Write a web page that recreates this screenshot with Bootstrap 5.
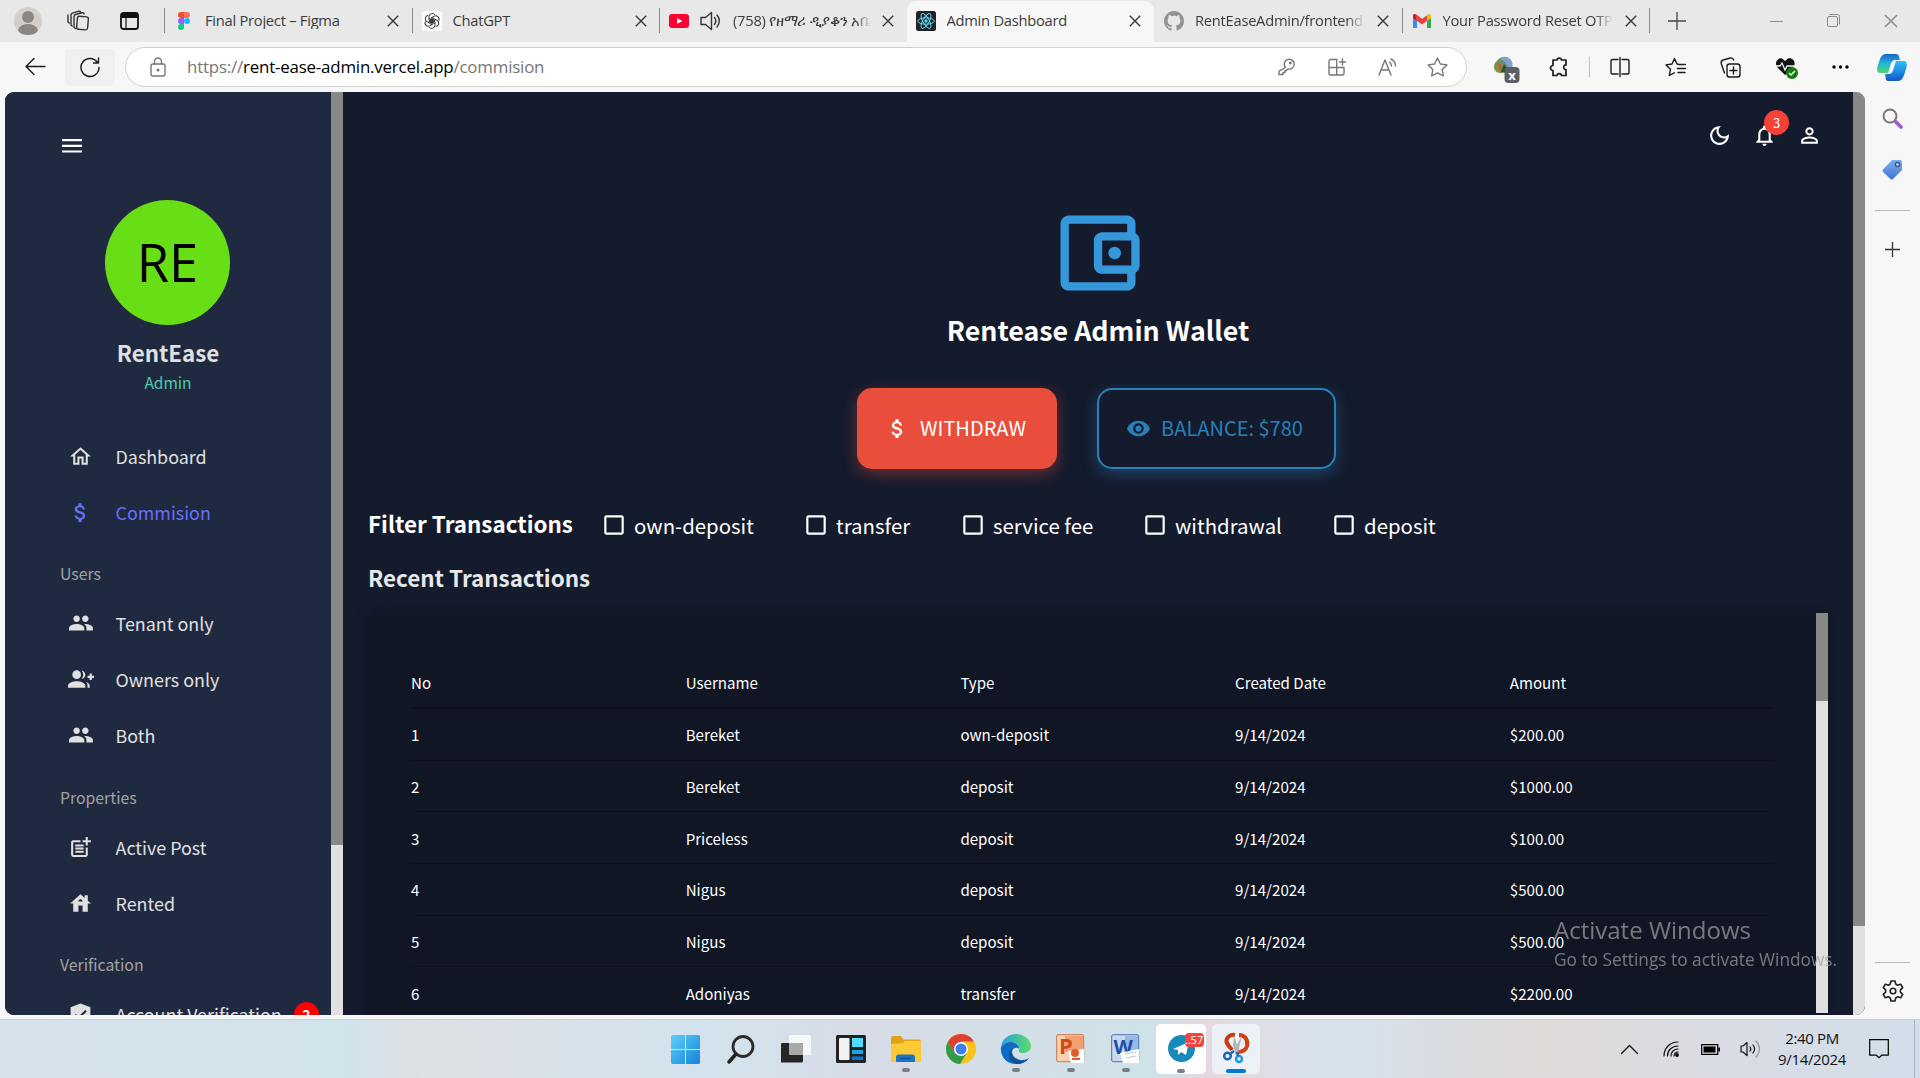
<!DOCTYPE html>
<html lang="en">
<head>
<meta charset="utf-8">
<title>Admin Dashboard</title>
<link href="https://cdn.jsdelivr.net/npm/bootstrap@5.3.0/dist/css/bootstrap.min.css" rel="stylesheet">
<style>
  html, body { height: 100%; overflow: hidden; }
  body { width: 1920px; height: 1078px; background: #f7f7f7; font-family: "Open Sans", "Noto Sans", sans-serif; color: #333; line-height: 1.2; }
  svg { display: block; flex: none; overflow: visible; }
  .ln { fill: none; stroke: currentColor; stroke-width: 1.4; stroke-linecap: round; stroke-linejoin: round; }
  .t { white-space: nowrap; }

  /* window tab strip */
  .tabstrip { height: 42px; padding-bottom: 1px; background: #e8e8e8; }
  .strip-left { width: 164px; padding-left: 14px; }
  .wtab { width: 247.5px; padding-left: 9px; border-left: 1px solid #8a8a8a; height: 25px; }
  .wtab.first-after, .wtab.live { border-left-color: transparent; }
  .wtab .ico { width: 20px; height: 20px; }
  .wtab .cap { width: 172px; margin-left: 11px; font-size: 14.7px; color: #3c3c3c; overflow: hidden; letter-spacing: -.25px; }
  .wtab .cap.fade-end { -webkit-mask-image: linear-gradient(90deg, #000 88%, transparent 99%); }
  .wtab .shut { margin-left: 10px; }
  .wtab.live { height: 41px; margin-top: 1px; background: #f7f7f7; border-radius: 9px 9px 0 0; border-left: 0; padding-left: 9px; }
  .wincontrols { color: #8b8b8b; }

  /* toolbar */
  .toolbar { height: 50px; background: #f7f7f7; color: #1b1b1b; }
  .reload { width: 50px; height: 37px; background: #f0f0f0; border-radius: 5px; }
  .address { width: 1342px; height: 40px; margin-left: 10px; border: 1px solid #d0d0d0; border-radius: 20px; background: #fff; color: #767676; padding-left: 24px; padding-right: 18px; }
  .url { font-size: 16.9px; margin-left: 21px; color: #767676; letter-spacing: -.2px; }
  .url b { font-weight: 400; color: #000; }

  /* page area */
  .stage { height: 923px; padding-left: 5px; }
  .viewport { width: 1860px; height: 923px; border-radius: 9px; overflow: hidden; background: #141b2d; font-family: "Noto Sans CJK JP", "Noto Sans CJK SC", sans-serif; }
  .rail { width: 326px; background: #1f2940; color: #e0e0e0; overflow: hidden; }
  .track { width: 12px; background: #e0e0e0; flex: none; }
  .thumb { background: #888; }
  .burger { margin: 47px 0 0 55px; height: 24px; color: #fff; }
  .disc { width: 125px; height: 125px; margin: 37px auto 0 100px; background: #68de17; color: #000; font: 400 52.5px/124px "Open Sans", sans-serif; }
  .brand { width: 326px; height: 32px; margin-top: 11px; font-size: 22.3px; line-height: 32px; font-weight: 700; }
  .role { height: 26px; margin-top: 1px; font-size: 15.5px; line-height: 26px; color: #4cceac; }
  .rolegap { height: 33px; }
  .menu-item { height: 56px; padding-left: 63px; font-size: 17.9px; line-height: 26px; }
  .menu-item .lbl { margin-left: 22.5px; }
  .menu-item.on { color: #6870fa; }
  .menu-head { height: 24px; margin: 22px 0 9px; padding-left: 55px; font-size: 15.8px; line-height: 24px; color: #a3a3a3; }
  .menu-head.wide-gap { margin-top: 23px; }
  .notice { width: 25px; height: 25px; line-height: 25px; font-size: 14px; background: red; color: #fff; font-weight: 700; margin-left: 12px; }

  .pane { width: 1510px; padding: 0 25px 0 25px; color: #fff; }
  .topicons { height: 86px; padding-right: 6px; gap: 20px; }
  .alarm { width: 25px; height: 25px; font-size: 13px; line-height: 25px; background: #f44336; top: -13px; left: 12px; }
  .wallet { margin-top: 25px; color: #3498db; }
  .walletname { font-size: 26.8px; line-height: 40px; font-weight: 700; margin-top: 7px; }
  .actions { margin-top: 38px; gap: 40px; margin-right: 3px; }
  .pill { height: 81px; border-radius: 15px; font-size: 20px; border: 0; padding: 0; }
  .pill-red { width: 200px; background: #e94e3d; color: #fff; padding-right: 3px; box-shadow: 0 5px 15px rgba(231,76,60,.4); }
  .pill-blue { width: 239px; border: 2px solid #2980b9; color: #2980b9; padding-right: 4px; box-shadow: 0 5px 15px rgba(41,128,185,.4); }
  .pill .t { margin-top: -2px; }
  .heading { font-size: 22.4px; line-height: 32px; font-weight: 700; }
  .filters { margin-top: 38px; height: 32px; }
  .chk { font-size: 20.4px; line-height: 30px; padding-top: 3px; }
  .ledger { width: 1461px; height: 400px; margin-top: 20px; margin-left: -1px; background: #101624; border-radius: 12px 0 0 0; box-shadow: 0 0 12px rgba(10,14,24,.55); }
  .ledger-body { width: 1449px; padding: 43px 43px 0 44px; }
  .trow { height: 51.7px; border-bottom: 1px solid #0c1019; font-size: 15.1px; line-height: 22px; color: #fff; }
  .trow.top { height: 53px; border-bottom-width: 2px; }
  .trow > div { width: 274.7px; flex: none; }

  /* browser side rail */
  .siderail { width: 55px; color: #222; }
  .siderail hr { width: 35px; margin: 0; border-top: 1px solid #bbb; opacity: 1; }

  .watermark { left: 1554px; top: 912px; color: #a0a0a0; opacity: .72; }
  .watermark .w1 { font-size: 24px; line-height: 36px; }
  .watermark .w2 { font-size: 17.3px; line-height: 24px; }

  /* taskbar */
  .taskbar { height: 59px; margin-top: 4px; padding-left: 658px; background: linear-gradient(90deg,#d7e2ec 0,#d0e2ea 18%,#dde0e4 22%,#d3e3ed 36%,#d7dce6 46%,#cfe2e9 60%,#e4d9de 63%,#d5e2ec 69%,#d9dde3 75%,#e1dad9 80%,#dadbe2 88%,#d2dfeb 100%); border-top: 1px solid #c4ced8; color: #111; }
  .app { width: 55px; height: 59px; padding-top: 15px; }
  .mk { width: 8px; height: 4px; border-radius: 2px; background: #7b7f84; margin-top: 4px; }
  .tile .mk { margin-top: 7px; }
  .tile .mk.active-app { width: 20px; background: #0078d4; margin-top: 6px; }
  .tile { width: 50px; height: 50px; border-radius: 5px; background: #fff; margin: 4px 3px 0 3px; padding-top: 11px; }
  .tile.soft { background: #ebf1f7; width: 48px; }
  .clock { font-size: 15px; line-height: 21px; letter-spacing: -.35px; }
  .cnt { left: 17px; top: -2px; width: 19px; height: 14px; border-radius: 4px; background: #ee4540; color: #fff; font-size: 11px; line-height: 14px; }
</style>
</head>
<body>
<svg width="0" height="0" class="position-absolute">
  <defs>
    <symbol id="x" viewBox="0 0 12 12"><path d="M.8.8l10.4 10.4M11.2.8L.8 11.2" fill="none" stroke="currentColor" stroke-width="1.3"/></symbol>
    <symbol id="people" viewBox="0 0 24 24"><path d="M16 11c1.66 0 2.99-1.34 2.99-3S17.66 5 16 5s-3 1.34-3 3 1.34 3 3 3zm-8 0c1.66 0 2.99-1.34 2.99-3S9.66 5 8 5 5 6.34 5 8s1.34 3 3 3zm0 2c-2.33 0-7 1.17-7 3.5V19h14v-2.500c0-2.330-4.670-3.500-7-3.500zm8 0c-.29 0-.62.02-.97.05 1.160.840 1.970 1.970 1.970 3.450V19h6v-2.500c0-2.330-4.670-3.500-7-3.500z"/></symbol>
    <symbol id="dollar" viewBox="0 0 24 24"><path d="M11.800 10.900c-2.270-.590-3-1.200-3-2.150 0-1.090 1.010-1.850 2.700-1.850 1.780 0 2.440.850 2.500 2.100h2.210c-.070-1.720-1.120-3.300-3.210-3.810V3h-3v2.160c-1.940.420-3.500 1.680-3.500 3.610 0 2.310 1.910 3.460 4.700 4.130 2.500.600 3 1.480 3 2.410 0 .690-.490 1.790-2.700 1.790-2.060 0-2.870-.920-2.980-2.100h-2.200c.120 2.190 1.760 3.420 3.680 3.830V21h3v-2.150c1.950-.370 3.500-1.500 3.500-3.550 0-2.840-2.430-3.810-4.700-4.400z"/></symbol>
    <symbol id="box" viewBox="0 0 24 24"><path d="M19 5v14H5V5h14m0-2H5c-1.100 0-2 .900-2 2v14c0 1.100.900 2 2 2h14c1.100 0 2-.900 2-2V5c0-1.100-.900-2-2-2z"/></symbol>
  </defs>
</svg>

<!-- tab strip -->
<header class="tabstrip d-flex align-items-center">
  <div class="strip-left d-flex align-items-center">
    <svg width="28" height="28" viewBox="0 0 28 28"><circle cx="14" cy="14" r="14" fill="#d3d0cb"/><circle cx="14" cy="10" r="6" fill="#8b8782"/><path d="M4 24c1-5 5-7 10-7s9 2 10 7c-3 3-6 4-10 4s-7-1-10-4z" fill="#8b8782"/></svg>
    <svg class="ln" style="margin-left:25px" width="22" height="22" viewBox="0 0 22 22"><rect x="10" y="6.500" width="11" height="13" rx="2" transform="rotate(5 15 13)"/><path d="M8.500 18.500L7 17.500V6.500q0-1.500 1.500-2L15 2.800q1.500-.3 2.200 1M5.200 16L4 15V5.200q0-1.500 1.300-2l6-1.900q1.500-.4 2.200.5M2.200 13L1 12V5"/></svg>
    <svg style="margin-left:31px" width="19" height="18" viewBox="0 0 19 18"><rect x="1" y="1" width="17" height="16" rx="2.500" fill="none" stroke="#111" stroke-width="1.800"/><path d="M1 2h17v4H1z" fill="#111"/><path d="M6 6v11" stroke="#111" stroke-width="1.200"/></svg>
  </div>
  <div class="wtab d-flex align-items-center">
    <svg class="ico" viewBox="0 0 20 20"><path d="M10 1H7a3 3 0 000 6h3z" fill="#f24e1e"/><path d="M10 1h3a3 3 0 010 6h-3z" fill="#ff7262"/><path d="M10 7H7a3 3 0 000 6h3z" fill="#a259ff"/><circle cx="13" cy="10" r="3" fill="#1abcfe"/><path d="M10 13H7a3 3 0 103 3z" fill="#0acf83"/></svg>
    <div class="cap t">Final Project – Figma</div><svg class="shut" width="12" height="12"><use href="#x"/></svg>
  </div>
  <div class="wtab d-flex align-items-center">
    <svg class="ico" viewBox="0 0 20 20"><rect width="20" height="20" rx="3" fill="#fff"/><g fill="none" stroke="#333" stroke-width="1"><path id="petal" d="M7 9.200V5.500a3.300 3.300 0 016-1.500M7 9.200l3 1.700 3.800-2.200"/><use href="#petal" transform="rotate(60 10 10)"/><use href="#petal" transform="rotate(120 10 10)"/><use href="#petal" transform="rotate(180 10 10)"/><use href="#petal" transform="rotate(240 10 10)"/><use href="#petal" transform="rotate(300 10 10)"/></g></svg>
    <div class="cap t">ChatGPT</div><svg class="shut" width="12" height="12"><use href="#x"/></svg>
  </div>
  <div class="wtab d-flex align-items-center">
    <svg class="ico" viewBox="0 0 20 20"><rect y="3" width="20" height="14" rx="3" fill="#f03"/><path d="M8 7l5.500 3L8 13z" fill="#fff"/></svg>
    <svg class="ln" style="margin-left:11px" width="20" height="20" viewBox="0 0 20 20"><path d="M1 6.500v7h4.500l6 5V1.500l-6 5zM14.500 6.500c1.500 2 1.500 5 0 7M17 4c3 3.500 3 8.500 0 12"/></svg>
    <div class="cap t fade-end" style="width:139px;margin-left:13px">(758) የዘማሪ ዲያቆን አቤ</div><svg class="shut" width="12" height="12"><use href="#x"/></svg>
  </div>
  <div class="wtab live d-flex align-items-center">
    <svg class="ico" viewBox="0 0 20 20"><rect width="20" height="20" rx="2.500" fill="#222"/><g fill="none" stroke="#5fd3f3" stroke-width="1"><ellipse cx="10" cy="10" rx="8.300" ry="3.200"/><ellipse cx="10" cy="10" rx="8.300" ry="3.200" transform="rotate(60 10 10)"/><ellipse cx="10" cy="10" rx="8.300" ry="3.200" transform="rotate(120 10 10)"/></g><circle cx="10" cy="10" r="1.700" fill="#5fd3f3"/></svg>
    <div class="cap t">Admin Dashboard</div><svg class="shut" width="12" height="12"><use href="#x"/></svg>
  </div>
  <div class="wtab first-after d-flex align-items-center">
    <svg class="ico" viewBox="0 0 16 16" fill="#909396"><path d="M8 0C3.580 0 0 3.580 0 8c0 3.540 2.290 6.530 5.470 7.590.400.070.550-.170.550-.380 0-.190-.010-.820-.010-1.490-2.010.370-2.530-.490-2.690-.940-.090-.230-.480-.940-.820-1.130-.280-.150-.680-.520-.010-.530.630-.010 1.080.580 1.230.820.720 1.210 1.870.870 2.330.660.070-.520.280-.870.510-1.070-1.780-.200-3.640-.890-3.640-3.950 0-.870.310-1.590.820-2.150-.080-.200-.360-1.020.080-2.120 0 0 .670-.210 2.200.820.640-.180 1.320-.270 2-.270s1.360.090 2 .270c1.530-1.040 2.200-.820 2.200-.820.440 1.100.160 1.920.080 2.120.510.560.820 1.270.820 2.150 0 3.070-1.870 3.750-3.650 3.950.290.250.540.730.540 1.480 0 1.070-.010 1.930-.010 2.200 0 .210.150.460.550.380A8 8 0 0016 8c0-4.420-3.580-8-8-8z"/></svg>
    <div class="cap t fade-end">RentEaseAdmin/frontend/</div><svg class="shut" width="12" height="12"><use href="#x"/></svg>
  </div>
  <div class="wtab d-flex align-items-center">
    <svg class="ico" viewBox="0 0 20 20"><path d="M1 5v12h4V9z" fill="#4285f4"/><path d="M19 5v12h-4V9z" fill="#34a853"/><path d="M1 4.500C1 3 3 2.500 4 3.500L10 8v5L1 7z" fill="#c5221f"/><path d="M4 3.500L10 8l6-4.500V9l-6 4.500L4 9z" fill="#ea4335"/><path d="M15 4.300C17 2.500 19 3 19 5v2l-4 3z" fill="#fbbc04"/></svg>
    <div class="cap t fade-end">Your Password Reset OTP</div><svg class="shut" width="12" height="12"><use href="#x"/></svg>
  </div>
  <div class="wtab d-flex align-items-center wincontrols" style="padding-left:18px">
    <svg width="18" height="18" viewBox="0 0 18 18"><path d="M9 0v18M0 9h18" stroke="#444" stroke-width="1.300"/></svg>
    <svg style="margin-left:84px" width="13" height="14" viewBox="0 0 13 14"><path d="M0 7.500h13" stroke="currentColor"/></svg>
    <svg class="ln" style="margin-left:44px;stroke-width:1" width="13" height="13" viewBox="0 0 13 13"><rect x=".5" y="2.500" width="10" height="10" rx="1.500"/><path d="M3 .5h7.500a2 2 0 012 2V10"/></svg>
    <svg style="margin-left:44px" width="14" height="14"><use href="#x"/></svg>
  </div>
</header>

<!-- toolbar -->
<nav class="toolbar d-flex align-items-center">
  <svg class="ln" style="margin-left:25px" width="20" height="18" viewBox="0 0 20 18"><path d="M20 8.500H1M9 .5L1 8.500l8 8"/></svg>
  <div class="reload d-flex align-items-center justify-content-center" style="margin-left:20px"><svg class="ln" width="20" height="20" viewBox="0 0 20 20"><path d="M17.500 5.500A9 9 0 1019 10.500M18.500 1v5h-5"/></svg></div>
  <div class="address d-flex align-items-center">
    <svg class="ln" width="16" height="20" viewBox="0 0 16 20"><rect x="1" y="7" width="14" height="12" rx="2"/><path d="M4.500 7V4.500a3.500 3.500 0 017 0V7"/><circle cx="8" cy="13" r=".8" fill="currentColor"/></svg>
    <div class="url t">https://<b>rent-ease-admin.vercel.app</b>/commision</div>
    <div class="ms-auto d-flex align-items-center">
      <svg class="ln" width="17" height="18" viewBox="0 0 17 18"><path d="M7.500 9.500A5 5 0 1110 11L8.500 12.500H7v2H5v2H1v-3.300z"/><circle cx="12.300" cy="5" r=".7"/></svg>
      <svg class="ln" style="margin-left:33px" width="19" height="18" viewBox="0 0 19 18"><path d="M9 1.500H2.500Q1 1.500 1 3v12.500Q1 17 2.500 17h12q1.500 0 1.500-1.500V9.500H1M8.700 1.500V17M14.500 1v6M11.500 4h6"/></svg>
      <svg class="ln" style="margin-left:31px" width="20" height="18" viewBox="0 0 20 18"><path d="M1 17L7 2l6 15M3 12h8M11.500 4c1.500 1 2 2.500 2 4M13 1c3 1.500 4.500 4 4.500 7"/></svg>
      <svg class="ln" style="margin-left:29px" width="21" height="20" viewBox="0 0 21 20"><path d="M10.500 1l2.900 6 6.500.9-4.700 4.600 1.100 6.500-5.800-3.100L4.700 19l1.100-6.500L1.100 7.900 7.600 7z"/></svg>
    </div>
  </div>
  <svg style="margin-left:24px;margin-top:6px" width="30" height="30" viewBox="0 0 30 30"><circle cx="13" cy="10" r="8" fill="#6f8a6e"/><path d="M9 4c4-4 10-2 12 3s-1 8-3 9c0-5-4-10-9-12z" fill="#7da3d0"/><path d="M3 12c0-4 3-7 6-7 0 4 1 6 5 7l-2 6c-5 1-9-2-9-6z" fill="#7a9447"/><path d="M7 8c2 0 4 3 4 7l-3-1z" fill="#c8583c"/><path d="M13 9l6 8h-9z" fill="#2f4f31"/><rect x="13.500" y="12" width="15" height="16" rx="4" fill="#5d6063"/><text x="21" y="24.500" font-size="13" font-weight="700" fill="#fff" text-anchor="middle">x</text></svg>
  <svg class="ln" style="margin-left:28px;stroke-width:1.700" width="20" height="21" viewBox="0 0 20 21"><path d="M5 3h3a2.300 2.300 0 014.500 0H17v5c-3-.5-3 5 0 4.500v6h-4.500a2.300 2.300 0 00-4.500 0H4v-5a2.500 2.500 0 010-5V3z"/></svg>
  <div class="vr" style="height:20px;margin:0 20px 0 20px;align-self:center;opacity:.25"></div>
  <svg class="ln" width="20" height="20" viewBox="0 0 20 20"><path d="M8 2.500H2.500Q1 2.500 1 4v11.500Q1 17 2.500 17H8M12 2.500h5.500Q19 2.500 19 4v11.500q0 1.500-1.500 1.500H12M10 .5v19"/></svg>
  <svg class="ln" style="margin-left:35px" width="21" height="20" viewBox="0 0 21 20"><path d="M13.500 7.200L12 7l-2.500-5.500L7 7l-6 .9 4.500 4.400L4.300 18.500l5-2.700M13.500 7.500h7M12.500 11.500h8M13 15.500h7"/></svg>
  <svg class="ln" style="margin-left:34px" width="21" height="21" viewBox="0 0 21 21"><rect x="7" y="7" width="13" height="13" rx="2.500"/><path d="M13.500 10v7M10 13.500h7M4.500 16L1.200 6.500a3 3 0 012-3.500l7-2a3 3 0 013.500 2"/></svg>
  <svg style="margin-left:34px;margin-top:2px" width="24" height="22" viewBox="0 0 24 22"><path d="M10 18L2 10C-1 6 3 0 7 1.500L10 4l3-2.500C18 0 22 6 18 10z" fill="#111"/><path d="M0 9h5l2-3 3 7 2-4h7" fill="none" stroke="#f7f7f7" stroke-width="1.300"/><circle cx="17" cy="16" r="6" fill="#107c10"/><path d="M14 16l2 2 4-4" fill="none" stroke="#fff" stroke-width="1.500"/></svg>
  <svg style="margin-left:33px" width="17" height="4" viewBox="0 0 17 4"><circle cx="2" cy="2" r="1.700"/><circle cx="8.500" cy="2" r="1.700"/><circle cx="15" cy="2" r="1.700"/></svg>
  <svg style="margin-left:28px" width="30" height="27" viewBox="0 0 30 27"><defs><linearGradient id="ca" x2="0" y2="1"><stop stop-color="#1763cf"/><stop offset=".5" stop-color="#24b6d8"/><stop offset="1" stop-color="#52d46f"/></linearGradient><linearGradient id="cb" x2="0" y2="1"><stop stop-color="#29c3ff"/><stop offset="1" stop-color="#1556c6"/></linearGradient></defs><path d="M9 0h10c3 0 3 3 4 6h-5c-3 0-4 3-5 7l-2 6H3c-4 0-3-5-2-8C3 5 4 0 9 0z" fill="url(#ca)"/><path d="M21 27H11c-3 0-2-4-3-7h4c3 0 4-3 5-7l2-6h8c4 0 3 5 2 8-2 6-3 12-8 12z" fill="url(#cb)"/></svg>
</nav>

<!-- page + browser side rail -->
<div class="stage d-flex">
  <main class="viewport d-flex">
    <aside class="rail flex-shrink-0">
      <div class="burger"><svg width="25" height="14" viewBox="0 0 25 14" fill="#fff"><path d="M2 0h20v2.200H2zM2 5.700h20v2.200H2zM2 11.400h20v2.200H2z"/></svg></div>
      <div class="disc rounded-circle text-center">RE</div>
      <div class="brand text-center">RentEase</div>
      <div class="role text-center">Admin</div>
      <div class="rolegap"></div>
      <div class="menu-item d-flex align-items-center"><svg width="25" height="25" viewBox="0 0 24 24" fill="currentColor"><path d="m12 5.690 5 4.500V18h-2v-6H9v6H7v-7.810l5-4.500M12 3 2 12h3v8h6v-6h2v6h6v-8h3L12 3z"/></svg><span class="lbl t">Dashboard</span></div>
      <div class="menu-item on d-flex align-items-center"><svg width="25" height="25" fill="currentColor"><use href="#dollar"/></svg><span class="lbl t">Commision</span></div>
      <div class="menu-head">Users</div>
      <div class="menu-item d-flex align-items-center"><svg width="26" height="26" style="margin-right:-1px" fill="currentColor"><use href="#people"/></svg><span class="lbl t">Tenant only</span></div>
      <div class="menu-item d-flex align-items-center"><svg width="26" height="26" viewBox="0 0 24 24" style="margin-right:-1px" fill="currentColor"><path d="M22 9V7h-2v2h-2v2h2v2h2v-2h2V9z"/><circle cx="8" cy="8" r="4"/><path d="M8 14c-2.670 0-8 1.340-8 4v2h16v-2c0-2.660-5.330-4-8-4zM12.510 4.050C13.430 5.110 14 6.490 14 8s-.570 2.890-1.490 3.950C14.470 11.700 16 10.040 16 8s-1.530-3.700-3.490-3.950zM16.530 14.830C17.420 15.660 18 16.700 18 18v2h2v-2c0-1.450-1.590-2.510-3.470-3.170z"/></svg><span class="lbl t">Owners only</span></div>
      <div class="menu-item d-flex align-items-center"><svg width="26" height="26" style="margin-right:-1px" fill="currentColor"><use href="#people"/></svg><span class="lbl t">Both</span></div>
      <div class="menu-head wide-gap">Properties</div>
      <div class="menu-item d-flex align-items-center"><svg width="25" height="25" viewBox="0 0 24 24" fill="currentColor"><path d="M17 19.220H5V7h7V5H5c-1.100 0-2 .900-2 2v12c0 1.100.900 2 2 2h12c1.100 0 2-.900 2-2v-7h-2v7.220z"/><path d="M19 2h-2v3h-3v2h3v2.990h2V7h3V5h-3zM7 9h8v2H7zM7 12v2h8v-2h-3zM7 15h8v2H7z"/></svg><span class="lbl t">Active Post</span></div>
      <div class="menu-item d-flex align-items-center"><svg width="25" height="25" viewBox="0 0 24 24" fill="currentColor"><path d="M19 9.300V4h-3v2.600L12 3 2 12h3v8h5v-6h4v6h5v-8h3l-3-2.700zM10 10c0-1.100.900-2 2-2s2 .900 2 2h-4z"/></svg><span class="lbl t">Rented</span></div>
      <div class="menu-head">Verification</div>
      <div class="menu-item d-flex align-items-center"><svg width="25" height="25" viewBox="0 0 24 24" fill="currentColor"><path d="M12 1.500L2.500 5v6c0 5.550 4 10.500 9.500 12 5.500-1.500 9.500-6.450 9.500-12V5zM10 17l-4-4 1.410-1.410L10 14.170l6.590-6.590L18 9z"/></svg><span class="lbl t">Account Verification</span><span class="notice rounded-circle text-center">2</span></div>
    </aside>
    <div class="track"><div class="thumb" style="height:753px"></div></div>

    <section class="pane flex-shrink-0">
      <div class="topicons d-flex align-items-center justify-content-end">
        <svg width="25" height="25" viewBox="0 0 24 24" fill="#fff"><path d="M9.370 5.510C9.190 6.150 9.100 6.820 9.100 7.500c0 4.080 3.320 7.400 7.400 7.400.680 0 1.350-.090 1.990-.270C17.450 17.190 14.930 19 12 19c-3.860 0-7-3.140-7-7 0-2.930 1.810-5.450 4.370-6.490zM12 3c-4.970 0-9 4.030-9 9s4.030 9 9 9 9-4.030 9-9c0-.460-.040-.920-.100-1.360-.980 1.370-2.580 2.260-4.400 2.260-2.980 0-5.400-2.420-5.400-5.400 0-1.810.890-3.420 2.260-4.400C12.920 3.040 12.460 3 12 3z"/></svg>
        <div class="position-relative"><svg width="25" height="25" viewBox="0 0 24 24" fill="#fff"><path d="M12 22c1.100 0 2-.900 2-2h-4c0 1.100.900 2 2 2zm6-6v-5c0-3.070-1.630-5.640-4.500-6.320V4c0-.830-.670-1.500-1.500-1.500s-1.500.670-1.500 1.500v.680C7.640 5.360 6 7.920 6 11v5l-2 2v1h16v-1l-2-2zm-2 1H8v-6c0-2.480 1.510-4.500 4-4.500s4 2.020 4 4.500v6z"/></svg><span class="alarm rounded-circle text-center position-absolute">3</span></div>
        <svg width="25" height="25" viewBox="0 0 24 24" fill="#fff"><path d="M12 5.900c1.160 0 2.100.940 2.100 2.100s-.940 2.100-2.100 2.100S9.900 9.160 9.900 8s.940-2.100 2.100-2.100m0 9c2.970 0 6.100 1.460 6.100 2.100v1.100H5.900V17c0-.640 3.130-2.100 6.100-2.100M12 4C9.790 4 8 5.790 8 8s1.790 4 4 4 4-1.790 4-4-1.790-4-4-4zm0 9c-2.670 0-8 1.340-8 4v3h16v-3c0-2.660-5.330-4-8-4z"/></svg>
      </div>
      <div class="d-flex flex-column align-items-center">
        <svg class="wallet" width="100" height="100" viewBox="0 0 24 24" fill="currentColor"><path d="M21 7.280V5c0-1.100-.900-2-2-2H5c-1.110 0-2 .900-2 2v14c0 1.100.890 2 2 2h14c1.100 0 2-.900 2-2v-2.280c.590-.350 1-.980 1-1.720V9c0-.740-.410-1.370-1-1.720zM20 9v6h-7V9h7zM5 19V5h14v2h-6c-1.100 0-2 .900-2 2v6c0 1.100.900 2 2 2h6v2H5z"/><circle cx="16" cy="12" r="1.500"/></svg>
        <div class="walletname">Rentease Admin Wallet</div>
        <div class="actions d-flex">
          <button class="btn pill pill-red d-flex align-items-center justify-content-center"><svg width="25" height="25" fill="#fff" style="margin-right:10px"><use href="#dollar"/></svg><span class="t">WITHDRAW</span></button>
          <button class="btn pill pill-blue d-flex align-items-center justify-content-center"><svg width="25" height="25" viewBox="0 0 24 24" fill="currentColor" style="margin-right:10px"><path d="M12 4.500C7 4.500 2.730 7.610 1 12c1.730 4.390 6 7.500 11 7.500s9.270-3.110 11-7.500c-1.730-4.390-6-7.500-11-7.500zM12 17c-2.760 0-5-2.240-5-5s2.240-5 5-5 5 2.240 5 5-2.240 5-5 5zm0-8c-1.660 0-3 1.340-3 3s1.340 3 3 3 3-1.340 3-3-1.340-3-3-3z"/></svg><span class="t">BALANCE: $780</span></button>
        </div>
      </div>
      <div class="filters d-flex align-items-center">
        <div class="heading" style="width:233px">Filter Transactions</div>
        <label class="chk d-flex align-items-center" style="width:202px"><svg width="26" height="26" fill="#fff" style="margin-right:7px"><use href="#box"/></svg><span class="t">own-deposit</span></label>
        <label class="chk d-flex align-items-center" style="width:157px"><svg width="26" height="26" fill="#fff" style="margin-right:7px"><use href="#box"/></svg><span class="t">transfer</span></label>
        <label class="chk d-flex align-items-center" style="width:182px"><svg width="26" height="26" fill="#fff" style="margin-right:7px"><use href="#box"/></svg><span class="t">service fee</span></label>
        <label class="chk d-flex align-items-center" style="width:189px"><svg width="26" height="26" fill="#fff" style="margin-right:7px"><use href="#box"/></svg><span class="t">withdrawal</span></label>
        <label class="chk d-flex align-items-center"><svg width="26" height="26" fill="#fff" style="margin-right:7px"><use href="#box"/></svg><span class="t">deposit</span></label>
      </div>
      <div class="heading" style="margin-top:22px;color:#e8e8e8">Recent Transactions</div>
      <div class="ledger d-flex">
        <div class="ledger-body">
          <div class="trow top d-flex align-items-center"><div>No</div><div>Username</div><div>Type</div><div>Created Date</div><div>Amount</div></div>
          <div class="trow d-flex align-items-center"><div>1</div><div>Bereket</div><div>own-deposit</div><div>9/14/2024</div><div>$200.00</div></div>
          <div class="trow d-flex align-items-center"><div>2</div><div>Bereket</div><div>deposit</div><div>9/14/2024</div><div>$1000.00</div></div>
          <div class="trow d-flex align-items-center"><div>3</div><div>Priceless</div><div>deposit</div><div>9/14/2024</div><div>$100.00</div></div>
          <div class="trow d-flex align-items-center"><div>4</div><div>Nigus</div><div>deposit</div><div>9/14/2024</div><div>$500.00</div></div>
          <div class="trow d-flex align-items-center"><div>5</div><div>Nigus</div><div>deposit</div><div>9/14/2024</div><div>$500.00</div></div>
          <div class="trow d-flex align-items-center"><div>6</div><div>Adoniyas</div><div>transfer</div><div>9/14/2024</div><div>$2200.00</div></div>
        </div>
        <div class="track"><div class="thumb" style="height:88px"></div></div>
      </div>
    </section>
    <div class="track"><div class="thumb" style="height:834px"></div></div>
  </main>
  <aside class="siderail d-flex flex-column align-items-center">
    <svg style="margin-top:16px" width="21" height="21" viewBox="0 0 21 21"><circle cx="8" cy="8" r="6.500" fill="none" stroke="#777" stroke-width="2"/><path d="M14 14l5 5" stroke="#9a5fcb" stroke-width="3.800" stroke-linecap="round"/></svg>
    <svg style="margin-top:30px" width="21" height="21" viewBox="0 0 21 21"><defs><linearGradient id="tg" x2="0" y2="1"><stop stop-color="#77b1f0"/><stop offset="1" stop-color="#4572d2"/></linearGradient></defs><path d="M10 1h8a2 2 0 012 2v8l-9 9a2 2 0 01-2.500 0L1 13a2 2 0 010-2.500z" fill="url(#tg)"/><circle cx="15.500" cy="5.500" r="2" fill="#fff" stroke="#2f4d94" stroke-width="1.500"/></svg>
    <hr style="margin-top:30px">
    <svg style="margin-top:31px" width="15" height="15" viewBox="0 0 15 15"><path d="M7.500 0v15M0 7.500h15" stroke="#333" stroke-width="1.300"/></svg>
    <hr style="margin-top:705px">
    <svg class="ln" style="margin-top:17px;stroke-width:1.600" width="22" height="22" viewBox="0 0 22 22"><circle cx="11" cy="11" r="2.800"/><path d="M9 1h4l.7 3 2 1.200 3-1 2 3.500-2.300 2.100v2.400l2.300 2.100-2 3.500-3-1-2 1.200L13 21H9l-.7-3-2-1.200-3 1-2-3.500 2.300-2.100V9.800L1.300 7.700l2-3.500 3 1 2-1.200z"/></svg>
  </aside>
</div>

<!-- taskbar -->
<footer class="taskbar d-flex">
  <div class="app d-flex flex-column align-items-center"><svg width="29" height="29" viewBox="0 0 29 29"><defs><linearGradient id="wg" x2="1" y2="1"><stop stop-color="#5fd0fa"/><stop offset="1" stop-color="#1482d8"/></linearGradient></defs><path d="M0 1.500Q0 0 1.500 0H14v14H0zM15 0h12.500Q29 0 29 1.500V14H15zM0 15h14v14H1.500Q0 29 0 27.500zM15 15h14v12.500q0 1.500-1.500 1.500H15z" fill="url(#wg)"/></svg></div>
  <div class="app d-flex flex-column align-items-center"><svg width="28" height="29" viewBox="0 0 28 29"><circle cx="16" cy="11.500" r="10" fill="none" stroke="#2a2a2a" stroke-width="2.800"/><path d="M9 19l-7 8" stroke="#222" stroke-width="3.500" stroke-linecap="round"/></svg></div>
  <div class="app d-flex flex-column align-items-center"><svg width="30" height="29" viewBox="0 0 30 29"><path d="M0 9Q0 8 1 8h21v18q0 1.500-1.500 1.500H0z" fill="#262626"/><path d="M8 0h20q2 0 2 2v18H8z" fill="#f8f8f8" opacity=".92"/><path d="M8 8h14v12H8z" fill="#a9a9a9"/></svg></div>
  <div class="app d-flex flex-column align-items-center"><svg width="30" height="28" viewBox="0 0 30 28"><rect width="30" height="28" rx="1.500" fill="#222"/><rect x="3" y="3" width="10.500" height="22" rx="1" fill="#f2f2f2"/><path d="M16 3h11v9H16z" fill="#50dcff"/><path d="M16 15h11v4H16z" fill="#1aa3e8"/><path d="M16 21.500h11V25H16z" fill="#0878d4"/></svg></div>
  <div class="app d-flex flex-column align-items-center"><svg width="30" height="29" viewBox="0 0 30 29"><path d="M0 3q0-2 2-2h8l2 3.500h16q2 0 2 2V27H0z" fill="#e0a314"/><path d="M0 9l12-1 2-2h16v21H0z" fill="#fdc934"/><path d="M5 27v-5q0-2.500 2.500-2.500h14Q24 19.500 24 22v5z" fill="#1673c6"/><path d="M9 23.500h11" stroke="#0b4f91"/></svg><div class="mk"></div></div>
  <div class="app d-flex flex-column align-items-center"><svg style="margin-top:-1px" width="30" height="30" viewBox="0 0 30 30"><circle cx="15" cy="15" r="15" fill="#fbc21a"/><path d="M15 15l-6.500 4L2 7.500A15 15 0 0014 30l7-11z" fill="#2f9b4b"/><path d="M15 7.500h13A15 15 0 002 7.500L8.500 19" fill="#df4034"/><circle cx="15" cy="15" r="7" fill="#fff"/><circle cx="15" cy="15" r="5.500" fill="#3c82ef"/></svg></div>
  <div class="app d-flex flex-column align-items-center"><svg style="margin-top:-1px" width="30" height="30" viewBox="0 0 30 30"><defs><linearGradient id="eg" x2="1"><stop stop-color="#1da3e4"/><stop offset="1" stop-color="#5fdc63"/></linearGradient></defs><path d="M0 13C1 5 8 0 15 0c8 0 15 6 15 12 0 5-4 7-8 7-3 0-5-1-4-3 2-4-3-8-8-8-4 0-8 2-10 5z" fill="url(#eg)"/><path d="M0 13c2-3 6-5 10-5 5 0 9 4 8 7-1-2-6-2-7 2-1 5 5 9 10 9 3 0 5-1 7-2-3 4-8 6-13 6C6 30-1 23 0 13z" fill="#0d6cc2"/><path d="M12 14c-3 6 1 13 9 13 3 0 5-1 7-3-3 4-7 6-12 6-9-2-10-12-4-16z" fill="#164e94"/></svg><div class="mk"></div></div>
  <div class="app d-flex flex-column align-items-center"><svg style="margin-top:-1px" width="29" height="30" viewBox="0 0 29 30"><rect x=".7" y=".7" width="27" height="27" rx="1.500" fill="#f8d0b3" stroke="#c97445"/><path d="M9 2h18v16H9z" fill="#f3a070"/><text x="3" y="20" font-size="22" font-weight="700" fill="#d24a10">P</text><path d="M12 17l16-2v14H15z" fill="#fff"/><circle cx="19" cy="19" r="4" fill="#e65a28"/><path d="M16 25h8" stroke="#e65a28" stroke-width="2"/></svg><div class="mk"></div></div>
  <div class="app d-flex flex-column align-items-center"><svg style="margin-top:-1px" width="29" height="30" viewBox="0 0 29 30"><rect x=".7" y=".7" width="27" height="27" rx="1.500" fill="#c8d9f0" stroke="#4c74b2"/><path d="M14 2h13v14H14z" fill="#9bb8e2"/><text x="2.500" y="20" font-size="20" font-weight="700" fill="#1d4fa8">W</text><path d="M9 19l19-4v14H12z" fill="#fff"/><path d="M14 20l11-2M15 24l10-2" stroke="#b9c6dc"/></svg><div class="mk"></div></div>
  <div class="tile d-flex flex-column align-items-center"><div class="position-relative"><svg width="27" height="27" viewBox="0 0 27 27"><circle cx="13.500" cy="13.500" r="13.500" fill="#1689bd"/><path d="M5 14l16-7-3 13-5-3-3 3v-5z" fill="#fff"/></svg><span class="cnt position-absolute text-center">..57</span></div><div class="mk"></div></div>
  <div class="tile soft d-flex flex-column align-items-center"><svg style="margin-top:-2px" width="26" height="30" viewBox="0 0 26 30"><path d="M12 2C6 1 2 6 4 10s4 5 5 7" fill="none" stroke="#c93c12" stroke-width="4"/><path d="M16 2c7 0 9 6 8 11-1 4-5 6-9 6" fill="none" stroke="#d5400f" stroke-width="4"/><path d="M11 2l5 17-3 2-3-8zM19 3l-4 16-3 3 1-9z" fill="#b5b5b5"/><circle cx="4.500" cy="23" r="3.300" fill="none" stroke="#1769bd" stroke-width="2.500"/><circle cx="16" cy="26" r="3" fill="none" stroke="#1b98e0" stroke-width="2.500"/><path d="M7 21l4-3M15 23l-1-4" stroke="#1769bd" stroke-width="2.500"/></svg><div class="mk active-app"></div></div>
  <div class="d-flex align-items-center ms-auto" style="padding-right:5px">
    <svg class="ln" width="17" height="9" viewBox="0 0 17 9"><path d="M.5 8.500l8-8 8 8"/></svg>
    <svg class="ln" style="margin-left:25px;stroke-width:1.200" width="16" height="16" viewBox="0 0 16 16"><path d="M1 15C1 7 7 1 15 1M4.500 15C4.500 9 9 5 15 5M8 15c0-4 3-7 7-7M11 15c0-2 2-4 4-4"/><circle cx="14" cy="14" r="1.300" fill="currentColor"/></svg>
    <svg style="margin-left:22px" width="19" height="11" viewBox="0 0 19 11"><path d="M.7.7h16v9.600H.7z" fill="none" stroke="#000" stroke-width="1.200"/><path d="M2.500 2.500h12v6h-12zM17.300 3.500H19v4h-1.700z"/></svg>
    <svg class="ln" style="margin-left:20px;stroke-width:1.200" width="21" height="18" viewBox="0 0 21 18"><path d="M1 6v6h2l4 3.500v-13L3 6zM10 7c1 1.500 1 3 0 4M13 5c2 2.500 2 5.500 0 8"/><path d="M16 1c4.500 5 4.500 11 0 16" opacity=".35"/></svg>
    <div class="clock text-center" style="width:72px;margin-left:15px"><div>2:40 PM</div><div>9/14/2024</div></div>
    <svg style="margin-left:21px" width="20" height="20" viewBox="0 0 20 20"><path d="M.7.700h18.600v15.500h-6.500L10 18.700l-2.800-2.500H.7z" fill="none" stroke="#000" stroke-width="1.200"/></svg>
    <div style="width:1px;height:59px;background:#aab4c0;margin-left:25px"></div>
  </div>
</footer>

<div class="watermark position-absolute"><div class="w1 t">Activate Windows</div><div class="w2 t">Go to Settings to activate Windows.</div></div>

<script src="https://cdn.jsdelivr.net/npm/bootstrap@5.3.0/dist/js/bootstrap.bundle.min.js"></script>
</body>
</html>
